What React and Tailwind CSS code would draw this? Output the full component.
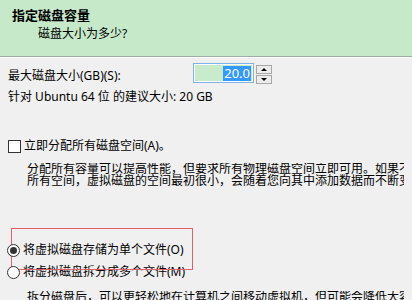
import React from 'react';

// ─── Small form controls ───
const Radio = ({ checked }) => (
  <span className="relative flex items-center justify-center w-[13px] h-[13px] rounded-full border border-[#333] bg-white shrink-0">
    {checked && <span className="w-[7px] h-[7px] rounded-full bg-[#333]"></span>}
  </span>
);

const Checkbox = () => (
  <span className="w-[13px] h-[13px] border border-[#333] bg-white shrink-0"></span>
);

const Spinner = () => (
  <div className="flex flex-col gap-[1px] w-[16px] mt-[2px] ml-[2px]">
    <div className="h-[9px] border border-[#a8a8a8] bg-[#ececec] flex items-center justify-center">
      <span className="w-0 h-0 border-x-[3px] border-x-transparent border-b-[3px] border-b-black"></span>
    </div>
    <div className="h-[9px] border border-[#a8a8a8] bg-[#ececec] flex items-center justify-center">
      <span className="w-0 h-0 border-x-[3px] border-x-transparent border-t-[3px] border-t-black"></span>
    </div>
  </div>
);

export default function App() {
  return (
    <div className="w-[412px] h-[300px] overflow-hidden bg-[#f0f0f0] text-black font-['Noto_Sans','Noto_Sans_CJK_SC',sans-serif]">
      {/* Header */}
      <header className="h-[57px] bg-[#c6e9c9] border-b border-b-[#a3aca4] pl-[12px] pt-[7px]">
        <div className="text-[13px] leading-[16px] font-bold">指定磁盘容量</div>
        <div className="text-[12px] leading-[14px] mt-[4px] pl-[26px]">磁盘大小为多少?</div>
      </header>
      <div className="h-[1px] bg-white"></div>

      {/* Body */}
      <div className="relative px-[8px] text-[12px]">
        {/* Max size row */}
        <div className="flex items-start mt-[5px]">
          <div className="w-[185px] mt-[6px] leading-[14px]">最大磁盘大小(GB)(S):</div>
          <div className="w-[61px] h-[20px] border border-[#7eb4ea] bg-white p-[1px]">
            <div className="h-full bg-[#c8ebcb] flex items-center justify-end pr-[1px]">
              <span className="bg-[#3399ff] text-white text-[13px] leading-[15px] px-[1px]">20.0</span>
            </div>
          </div>
          <Spinner />
        </div>

        <div className="mt-[6px] leading-[14px] whitespace-nowrap">针对 Ubuntu 64 位 的建议大小: 20 GB</div>

        {/* Allocate now */}
        <div className="flex items-center gap-[3px] mt-[35px] h-[14px] leading-[14px]">
          <Checkbox />
          <span>立即分配所有磁盘空间(A)。</span>
        </div>
        <div className="pl-[19px] mt-[10px] leading-[12px] whitespace-nowrap overflow-hidden">
          <div>分配所有容量可以提高性能，但要求所有物理磁盘空间立即可用。如果不立即分配</div>
          <div>所有空间，虚拟磁盘的空间最初很小，会随着您向其中添加数据而不断变大。</div>
        </div>

        {/* Highlight annotation */}
        <div className="absolute left-[11px] top-[165px] w-[182px] h-[42px] border border-[#e0606c]"></div>

        {/* Single / split */}
        <div className="flex items-center gap-[3px] mt-[56px] h-[14px] leading-[14px] -ml-[1px]">
          <Radio checked />
          <span>将虚拟磁盘存储为单个文件(O)</span>
        </div>
        <div className="flex items-center gap-[3px] mt-[8px] h-[14px] leading-[14px] -ml-[1px]">
          <Radio />
          <span>将虚拟磁盘拆分成多个文件(M)</span>
        </div>
        <div className="pl-[19px] mt-[12px] leading-[12px] whitespace-nowrap overflow-hidden">
          拆分磁盘后，可以更轻松地在计算机之间移动虚拟机，但可能会降低大容量磁盘的性能。
        </div>
      </div>
    </div>
  );
}
